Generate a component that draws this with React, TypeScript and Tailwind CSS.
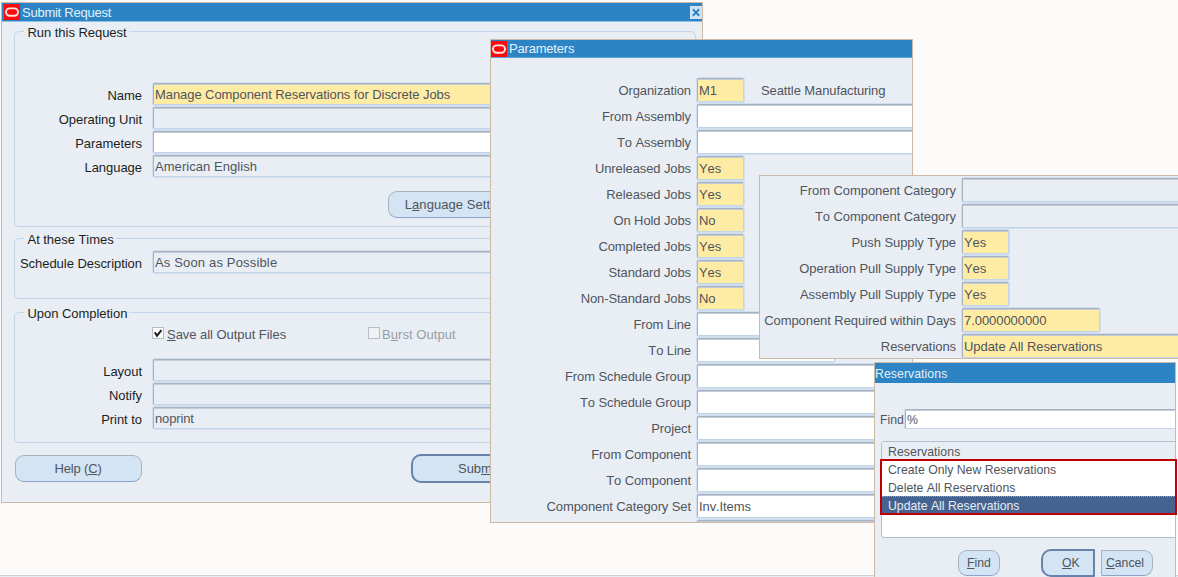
import React from 'react';

const cx = (...parts: (string | false | undefined)[]) => parts.filter(Boolean).join(' ');

type Tone = 'required' | 'editable' | 'readonly';

const tones: Record<Tone, string> = {
  required: 'bg-[#feeca5]',
  editable: 'bg-white',
  readonly: 'bg-[#e9eef5]',
};

function Field({ tone, value, className }: { tone: Tone; value?: string; className?: string }) {
  return (
    <div
      className={cx(
        'flex shrink-0 items-center rounded-[2px] border border-t-[#a7b2c1] border-l-[#a7b2c1] border-r-[#c3d5ea] border-b-[#c3d5ea] pl-px text-[#50555c] shadow-[0_0_0_1px_#d0deef,inset_0_1px_0_#c5ccd6]',
        tones[tone],
        className,
      )}
    >
      {value}
    </div>
  );
}

function OracleMark({ className }: { className?: string }) {
  return (
    <svg viewBox="0 0 16 16" className={cx('size-4 shrink-0 bg-[#fb0a10]', className)}>
      <rect x="2" y="4.4" width="12" height="7.4" rx="3.7" fill="none" stroke="#ffe3e0" strokeWidth="1.9" />
    </svg>
  );
}

function Section({ title, className, children }: { title: string; className: string; children: React.ReactNode }) {
  return (
    <section className={cx('flex w-[682px] shrink-0 flex-col rounded-[5px] border border-[#c3d5ea]', className)}>
      <h2 className="-mt-[7px] ml-[9px] h-4 self-start bg-[#e9eef5] pl-[3.5px] pr-[2px] leading-4 text-[#1c1e21]">{title}</h2>
      {children}
    </section>
  );
}

function RequestRow({ label, tone, value, valueTracking }: {
  label: string; tone: Tone; value?: string; valueTracking?: string;
}) {
  return (
    <div className="flex h-[22px] items-center">
      <span className="w-[127px] shrink-0 pt-[4px] text-right text-[#1c1e21]">{label}</span>
      <Field tone={tone} value={value} className={cx('ml-[11px] h-[22px] w-[400px] pt-[2px]', valueTracking)} />
    </div>
  );
}

function ParamRow({ label, tone, value, width, labelWidth, note }: {
  label: string; tone: Tone; value?: string; width: string; labelWidth: string; note?: string;
}) {
  return (
    <div className="flex h-6 shrink-0 items-center">
      <span className={cx('shrink-0 pt-px text-right text-[#50555c]', labelWidth)}>{label}</span>
      <Field tone={tone} value={value} className={cx('ml-[6px] h-6 pt-px', width)} />
      {note && <span className="ml-[17px] pt-px text-[#50555c]">{note}</span>}
    </div>
  );
}

const plainButton =
  'flex shrink-0 items-center justify-center border border-[#a9b2bc] border-b-[#8ba3c4] bg-[#d3e4f4] text-[#50555c]';
const defaultButton =
  'flex shrink-0 items-center border-2 border-[#6782ab] bg-[#d3e4f4] text-[#50555c]';

function SubmitRequestWindow() {
  return (
    <div className="absolute left-px top-[2px] flex h-[501px] w-[702px] flex-col overflow-hidden border border-[#cdb9a8] bg-[#e9eef5]">
      <header className="flex h-[19px] shrink-0 items-center border-b border-[#8fc0e4] bg-[#2c84c4] pl-[2px] text-[#e4f1fb]">
        <OracleMark />
        <span className="ml-[2px] flex-1 pt-px tracking-[-0.25px]">Submit Request</span>
        <svg viewBox="0 0 12 13" className="h-[13px] w-3 bg-[#cfe4f5]">
          <path d="M2.8 3.3l6.4 6.4M9.2 3.3l-6.4 6.4" stroke="#2c84c4" strokeWidth="2" />
        </svg>
      </header>
      <div className="flex flex-col pl-3 pt-[9px]">
        <Section title="Run this Request" className="h-[196px]">
          <div className="mt-[42px] flex flex-col gap-[2px]">
            <RequestRow label="Name" tone="required" value="Manage Component Reservations for Discrete Jobs" valueTracking="tracking-[-0.07px]" />
            <RequestRow label="Operating Unit" tone="readonly" />
            <RequestRow label="Parameters" tone="editable" />
            <RequestRow label="Language" tone="readonly" value="American English" valueTracking="tracking-[0.05px]" />
          </div>
          <button className={cx(plainButton, 'ml-[373px] mt-[14px] h-[27px] w-[143px] rounded-[9px]')}>
            <span className="tracking-[0.06px]">L<u>a</u>nguage Settings</span>
          </button>
        </Section>
        <Section title="At these Times" className="mt-[11px] h-[61px]">
          <div className="mt-[3px]">
            <RequestRow label="Schedule Description" tone="readonly" value="As Soon as Possible" valueTracking="tracking-[0.16px]" />
          </div>
        </Section>
        <Section title="Upon Completion" className="mt-[13px] h-[131px]">
          <div className="mt-[5px] flex h-4 items-start pl-[137px] leading-4 text-[#50555c]">
            <svg viewBox="0 0 12 12" className="size-3">
              <rect x=".5" y=".5" width="11" height="11" fill="#fff" stroke="#b4bcc5" />
              <path d="M2.8 5.2l2.2 3.6 4.4-5.6" fill="none" stroke="#17191c" strokeWidth="2" />
            </svg>
            <span className="ml-[3px] w-[201px]"><u>S</u>ave all Output Files</span>
            <svg viewBox="0 0 12 12" className="size-3">
              <rect x=".5" y=".5" width="11" height="11" fill="#edf2f6" stroke="#b9bec4" />
            </svg>
            <span className="ml-[2px] tracking-[0.06px] text-[#979da4]">B<u>u</u>rst Output</span>
          </div>
          <div className="mt-4 flex flex-col gap-[2px]">
            <RequestRow label="Layout" tone="readonly" />
            <RequestRow label="Notify" tone="readonly" />
            <RequestRow label="Print to" tone="readonly" value="noprint" valueTracking="tracking-[-0.15px]" />
          </div>
        </Section>
        <div className="mt-[11px] flex h-[29px] items-center">
          <button className={cx(plainButton, 'ml-px h-[27px] w-[127px] rounded-[9px] pr-px')}>
            <span className="tracking-[-0.15px]">Help (<u>C</u>)</span>
          </button>
          <button className={cx(defaultButton, 'ml-[269px] h-[29px] w-[128px] rounded-[10px] pl-[45px]')}>
            <span>Sub<u>m</u>it</span>
          </button>
        </div>
      </div>
    </div>
  );
}

const parameters: { label: string; tone: Tone; value?: string; width: string; note?: string }[] = [
  { label: 'Organization', tone: 'required', value: 'M1', width: 'w-[47px]', note: 'Seattle Manufacturing' },
  { label: 'From Assembly', tone: 'editable', width: 'w-[300px]' },
  { label: 'To Assembly', tone: 'editable', width: 'w-[300px]' },
  { label: 'Unreleased Jobs', tone: 'required', value: 'Yes', width: 'w-[47px]' },
  { label: 'Released Jobs', tone: 'required', value: 'Yes', width: 'w-[47px]' },
  { label: 'On Hold Jobs', tone: 'required', value: 'No', width: 'w-[47px]' },
  { label: 'Completed Jobs', tone: 'required', value: 'Yes', width: 'w-[47px]' },
  { label: 'Standard Jobs', tone: 'required', value: 'Yes', width: 'w-[47px]' },
  { label: 'Non-Standard Jobs', tone: 'required', value: 'No', width: 'w-[47px]' },
  { label: 'From Line', tone: 'editable', width: 'w-[138px]' },
  { label: 'To Line', tone: 'editable', width: 'w-[138px]' },
  { label: 'From Schedule Group', tone: 'editable', width: 'w-[300px]' },
  { label: 'To Schedule Group', tone: 'editable', width: 'w-[300px]' },
  { label: 'Project', tone: 'editable', width: 'w-[300px]' },
  { label: 'From Component', tone: 'editable', width: 'w-[300px]' },
  { label: 'To Component', tone: 'editable', width: 'w-[300px]' },
  { label: 'Component Category Set', tone: 'editable', value: 'Inv.Items', width: 'w-[300px]' },
  { label: '', tone: 'editable', width: 'w-[300px]' },
];

function ParametersWindow() {
  return (
    <div className="absolute left-[490px] top-[39px] flex h-[484px] w-[423px] flex-col overflow-hidden border border-[#cdb9a8] bg-[#e9eef5] tracking-[-0.1px]">
      <header className="flex h-[18px] shrink-0 items-center border-b border-[#5ea5d9] bg-[#2c84c4] text-[#e4f1fb]">
        <OracleMark />
        <span className="ml-[2px] tracking-[-0.2px]">Parameters</span>
      </header>
      <div className="flex flex-col gap-[2px] pt-5">
        {parameters.map((p) => (
          <ParamRow key={p.label} {...p} labelWidth="w-[200px]" />
        ))}
      </div>
    </div>
  );
}

const moreParameters: { label: string; tone: Tone; value?: string; width: string }[] = [
  { label: 'From Component Category', tone: 'readonly', width: 'w-[300px]' },
  { label: 'To Component Category', tone: 'readonly', width: 'w-[300px]' },
  { label: 'Push Supply Type', tone: 'required', value: 'Yes', width: 'w-[47px]' },
  { label: 'Operation Pull Supply Type', tone: 'required', value: 'Yes', width: 'w-[47px]' },
  { label: 'Assembly Pull Supply Type', tone: 'required', value: 'Yes', width: 'w-[47px]' },
  { label: 'Component Required within Days', tone: 'required', value: '7.0000000000', width: 'w-[138px]' },
  { label: 'Reservations', tone: 'required', value: 'Update All Reservations', width: 'w-[300px]' },
];

function MoreParametersPanel() {
  return (
    <div className="absolute left-[759px] top-[175px] flex h-[184px] w-[419px] flex-col gap-[2px] overflow-hidden border border-r-0 border-[#cdb9a8] bg-[#e9eef5] pt-[2px] tracking-[-0.06px]">
      {moreParameters.map((p) => (
        <ParamRow key={p.label} {...p} labelWidth="w-[196px]" />
      ))}
    </div>
  );
}

const choices = ['Create Only New Reservations', 'Delete All Reservations', 'Update All Reservations'];

function ReservationsWindow() {
  return (
    <div className="absolute left-[874px] top-[362px] flex h-[230px] w-[302px] flex-col border border-[#cdb9a8] bg-[#e9eef5] text-[12.25px] tracking-[0px]">
      <header className="h-5 shrink-0 bg-[#2c84c4] leading-[22px] tracking-[0.07px] text-[#e4f1fb]">Reservations</header>
      <div className="mt-[26px] flex h-5 items-center overflow-hidden pl-[5px] text-[#50555c]">
        <span className="w-[25px] shrink-0 pt-px">Find</span>
        <Field tone="editable" value="%" className="h-5 w-[280px] pt-px" />
      </div>
      <div className="mt-3 overflow-hidden pl-[6px]">
        <div className="h-[97px] w-[310px] rounded-[3px] border border-[#b3bfce] bg-white text-[#50555c]">
          <div className="h-[18px] bg-[#e9eef5] pl-[6px] leading-[20px] tracking-[0.07px]">Reservations</div>
          {choices.map((c, i) => (
            <div
              key={c}
              className={cx(
                'h-[18px] pl-[6px]',
                i === 2
                  ? 'border-y border-dotted border-[#8fa5c4] bg-[#456390] leading-[18px] text-[#e6edf6]'
                  : 'leading-[20px]',
              )}
            >
              {c}
            </div>
          ))}
        </div>
      </div>
      <div className="mt-[11px] flex items-start pl-[83px]">
        <button className={cx(plainButton, 'mt-px h-[26px] w-[42px] rounded-[9px]')}>
          <span><u>F</u>ind</span>
        </button>
        <button className={cx(defaultButton, 'ml-[41px] h-[28px] w-[54px] rounded-l-[10px] rounded-r-[1px] pl-[19px]')}>
          <span><u>O</u>K</span>
        </button>
        <button className={cx(plainButton, 'ml-[6px] mt-px h-[26px] w-[52px] rounded-l-[1px] rounded-r-[9px] pr-1')}>
          <span><u>C</u>ancel</span>
        </button>
      </div>
    </div>
  );
}

export default function App() {
  return (
    <div className="relative flex h-[577px] w-[1178px] flex-col justify-end overflow-hidden bg-[#fcfbf9] font-['Liberation_Sans',sans-serif] text-[13px] leading-4 tracking-[-0.04px] [font-kerning:none]">
      <div className="h-[2px] border-t border-[#cbd3d9] bg-[#e9eef5]" />
      <SubmitRequestWindow />
      <ParametersWindow />
      <MoreParametersPanel />
      <ReservationsWindow />
      <div className="absolute left-[880px] top-[459px] h-14 w-[297px] border-2 border-[#c00000]" />
    </div>
  );
}
